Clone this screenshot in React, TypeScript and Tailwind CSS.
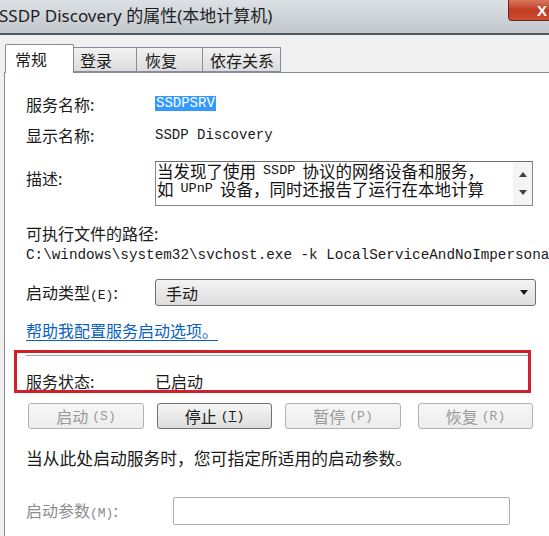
import React from "react";

const cjk = "font-['Noto_Sans_CJK_SC',sans-serif]";
const mono = "font-['Liberation_Mono','Noto_Sans_CJK_SC',monospace]";

function Btn({ label, key2, enabled, className }: { label: string; key2: string; enabled?: boolean; className?: string }) {
  return (
    <div
      className={
        "h-[26px] flex items-center justify-center rounded-[3px] border " +
        (enabled
          ? "border-[#707070] bg-gradient-to-b from-[#f6f6f6] to-[#dcdcdc] text-[#1a1a1a] "
          : "border-[#adb2b5] bg-gradient-to-b from-[#f7f7f7] to-[#ececec] text-[#9a9a9a] ") +
        (className ?? "")
      }
    >
      <span className={cjk + " text-[16px] leading-none"}>{label}</span>
      <span className={mono + " text-[13px] leading-none ml-[4px]"}>
        (<span className={enabled ? "underline" : ""}>{key2}</span>)
      </span>
    </div>
  );
}

export default function App() {
  return (
    <div className={"w-[549px] h-[536px] overflow-hidden bg-[#f0f0f0] flex flex-col " + cjk}>
      {/* Title bar */}
      <div className="h-[33px] shrink-0 flex justify-between items-start bg-gradient-to-b from-[#dde1e5] via-[#cfd4d9] to-[#c2c7cc]">
        <div className="h-[33px] flex items-center -ml-[1px] pb-[2px]">
          <span className="text-[17px] leading-none text-[#1e1e1e] font-['Noto_Sans','Noto_Sans_CJK_SC',sans-serif]">
            SSDP Discovery 的属性(本地计算机)
          </span>
        </div>
        <div className="w-[60px] -mr-[19px] h-[21px] rounded-bl-[4px] border border-t-0 border-[#6e2418] bg-gradient-to-b from-[#d9765f] via-[#c03a22] to-[#cc4d2e] flex items-center pl-[28px]">
          <span className="text-white text-[15px] font-bold leading-none font-['Liberation_Sans',sans-serif]">X</span>
        </div>
      </div>
      <div className="h-[2px] shrink-0 bg-[#555a5f]" />

      {/* Tabs */}
      <div className="flex items-end pl-[5px] pt-[9px] relative z-10">
        <div className="h-[29px] w-[69px] bg-white border border-b-0 border-[#898c95] flex items-center pl-[9px] -mb-[1px] rounded-t-[2px]">
          <span className="text-[16px] leading-none text-[#1a1a1a]">常规</span>
        </div>
        <div className="h-[25px] w-[63px] border border-[#898c95] border-l-0 bg-gradient-to-b from-[#f2f2f2] to-[#dcdcdc] flex items-center pl-[6px]">
          <span className="text-[16px] leading-none text-[#1a1a1a]">登录</span>
        </div>
        <div className="h-[25px] w-[66px] border border-[#898c95] border-l-0 bg-gradient-to-b from-[#f2f2f2] to-[#dcdcdc] flex items-center pl-[8px]">
          <span className="text-[16px] leading-none text-[#1a1a1a]">恢复</span>
        </div>
        <div className="h-[25px] w-[78px] border border-[#898c95] border-l-0 bg-gradient-to-b from-[#f2f2f2] to-[#dcdcdc] flex items-center pl-[7px]">
          <span className="text-[16px] leading-none text-[#1a1a1a]">依存关系</span>
        </div>
      </div>

      {/* Panel */}
      <div className="flex-1 ml-[4px] bg-white border-l border-t border-[#898c95] pl-[21px] text-[#1a1a1a] flex flex-col min-w-0 overflow-hidden">
        {/* Service name */}
        <div className="mt-[21px] h-[19px] flex items-center">
          <div className="w-[129px] text-[16px] leading-none">服务名称:</div>
          <span className={mono + " text-[14px] leading-[15px] bg-[#3399ff] text-white px-[1px]"}>SSDPSRV</span>
        </div>
        {/* Display name */}
        <div className="mt-[13px] h-[18px] flex items-center">
          <div className="w-[129px] text-[16px] leading-none">显示名称:</div>
          <span className={mono + " text-[14px] leading-none"}>SSDP Discovery</span>
        </div>
        {/* Description */}
        <div className="mt-[17px] h-[45px] flex items-start">
          <div className="w-[129px] text-[16px] leading-none mt-[9px]">描述:</div>
          <div className="w-[378px] h-[45px] border border-[#828790] border-t-[#6d6d6d] flex">
            <div className="flex-1 pl-[1px] text-[16.5px] text-[#111] overflow-hidden flex flex-col">
              <div className="h-[18px] flex items-center whitespace-nowrap leading-none">
                <span>当发现了使用</span>
                <span className={mono + " text-[13.5px] mx-[7px]"}>SSDP</span>
                <span>协议的网络设备和服务，</span>
              </div>
              <div className="h-[18px] flex items-center whitespace-nowrap leading-none">
                <span>如</span>
                <span className={mono + " text-[13.5px] mx-[7px]"}>UPnP</span>
                <span>设备，同时还报告了运行在本地计算</span>
              </div>
            </div>
            <div className="w-[19px] h-full bg-[#f4f4f4] flex flex-col items-center justify-between py-[10px] shrink-0">
              <svg width="8" height="5" viewBox="0 0 8 5"><path d="M4 0 L8 5 L0 5 Z" fill="#404040" /></svg>
              <svg width="8" height="5" viewBox="0 0 8 5"><path d="M0 0 L8 0 L4 5 Z" fill="#404040" /></svg>
            </div>
          </div>
        </div>
        {/* Executable path */}
        <div className="mt-[17px] h-[20px] flex items-center text-[16px] leading-none">可执行文件的路径:</div>
        <div className={"mt-[3px] h-[18px] flex items-center whitespace-nowrap text-[14.3px] leading-none " + mono}>
          C:\windows\system32\svchost.exe -k LocalServiceAndNoImpersonation
        </div>
        {/* Startup type */}
        <div className="mt-[15px] h-[27px] flex items-center">
          <div className="w-[129px] text-[16px] leading-none">
            启动类型<span className={mono + " text-[13px]"}>(E)</span>:
          </div>
          <div className="w-[381px] h-[27px] rounded-[3px] border border-[#707070] bg-gradient-to-b from-[#f3f3f3] to-[#dedede] flex items-center justify-between pl-[10px] pr-[7px]">
            <span className="text-[16px] leading-none">手动</span>
            <svg width="8" height="5" viewBox="0 0 8 5"><path d="M0 0 L8 0 L4 5 Z" fill="#1a1a1a" /></svg>
          </div>
        </div>
        {/* Link */}
        <div className="mt-[15px] h-[18px] flex items-center">
          <span className="text-[16px] leading-none text-[#0a5fc4] underline underline-offset-[3px]">帮助我配置服务启动选项。</span>
        </div>
        {/* Red highlight box with status */}
        <div className="mt-[11px] -ml-[12px] w-[517px] h-[43px] border-[3px] border-[#d2202a] flex flex-col">
          <div className="mt-[2px] ml-[9px] h-[2px] border-t border-[#a0a0a0] border-b border-b-white" />
          <div className="mt-[15px] ml-[9px] h-[18px] flex items-center">
            <div className="w-[129px] text-[16px] leading-none">服务状态:</div>
            <span className="text-[16px] leading-none">已启动</span>
          </div>
        </div>
        {/* Buttons */}
        <div className="mt-[10px] ml-[2px] flex">
          <Btn label="启动" key2="S" className="w-[116px]" />
          <Btn label="停止" key2="T" enabled className="w-[115px] ml-[13px]" />
          <Btn label="暂停" key2="P" className="w-[116px] ml-[13px]" />
          <Btn label="恢复" key2="R" className="w-[115px] ml-[17px]" />
        </div>
        {/* Hint */}
        <div className="mt-[19px] h-[20px] flex items-center text-[16.8px] leading-none whitespace-nowrap">
          当从此处启动服务时，您可指定所适用的启动参数。
        </div>
        {/* Start params */}
        <div className="mt-[29px] h-[28px] flex items-center">
          <div className="w-[147px] text-[16px] leading-none text-[#8d8d8d]">
            启动参数<span className={mono + " text-[13px]"}>(M)</span>:
          </div>
          <div className="w-[337px] h-[28px] rounded-[2px] border border-[#abadb3] bg-white" />
        </div>
      </div>
    </div>
  );
}
